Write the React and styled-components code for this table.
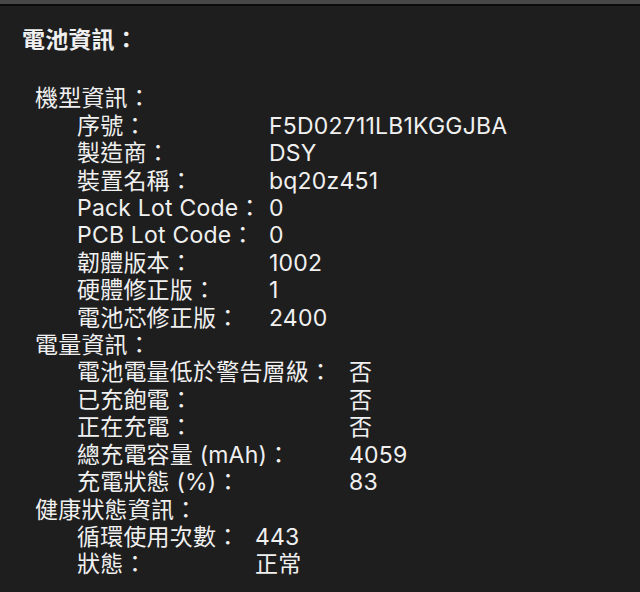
import React from 'react';
import styled, { createGlobalStyle } from 'styled-components';

const GlobalStyle = createGlobalStyle`
  html, body {
    margin: 0;
    padding: 0;
    background: #1e1e1e;
  }
`;

const sections = [
  {
    title: '機型資訊：',
    labelWidth: 192,
    fields: [
      ['序號：', 'F5D02711LB1KGGJBA'],
      ['製造商：', 'DSY'],
      ['裝置名稱：', 'bq20z451'],
      ['Pack Lot Code：', '0'],
      ['PCB Lot Code：', '0'],
      ['韌體版本：', '1002'],
      ['硬體修正版：', '1'],
      ['電池芯修正版：', '2400'],
    ],
  },
  {
    title: '電量資訊：',
    labelWidth: 272,
    fields: [
      ['電池電量低於警告層級：', '否'],
      ['已充飽電：', '否'],
      ['正在充電：', '否'],
      ['總充電容量 (mAh)：', '4059'],
      ['充電狀態 (%)：', '83'],
    ],
  },
  {
    title: '健康狀態資訊：',
    labelWidth: 178,
    fields: [
      ['循環使用次數：', '443'],
      ['狀態：', '正常'],
    ],
  },
];

const App = () => {
  return (
    <Window>
      <GlobalStyle />
      <TitleBar />
      <Content>
        <Title>電池資訊：</Title>
        {sections.map(section => (
          <Section key={section.title}>
            <SectionHeading>{section.title}</SectionHeading>
            <Fields $labelWidth={section.labelWidth}>
              {section.fields.map(([label, value]) => (
                <React.Fragment key={label}>
                  <Label>{label}</Label>
                  <Value>{value}</Value>
                </React.Fragment>
              ))}
            </Fields>
          </Section>
        ))}
      </Content>
    </Window>
  );
};

export default App;

const Window = styled.div`
  width: 640px;
  height: 592px;
  overflow: hidden;
  background: #1e1e1e;
  color: #f0f0f0;
  font-family: "Inter", "Noto Sans CJK TC", sans-serif;
  font-size: 23px;
  letter-spacing: 0.2px;
  line-height: 27.4px;
`;

const TitleBar = styled.div`
  height: 4px;
  background: #484848;
  border-bottom: 2px solid #0c0c0c;
`;

const Content = styled.div`
  padding: 21px 0 0 22px;
`;

const Title = styled.div`
  font-weight: 700;
  margin-bottom: 31px;
`;

const Section = styled.section`
  padding-left: 13px;
`;

const SectionHeading = styled.div``;

const Fields = styled.div`
  display: grid;
  grid-template-columns: ${p => p.$labelWidth}px auto;
  justify-content: start;
  padding-left: 42px;
`;

const Label = styled.span`
  white-space: nowrap;
`;

const Value = styled.span`
  white-space: nowrap;
`;
